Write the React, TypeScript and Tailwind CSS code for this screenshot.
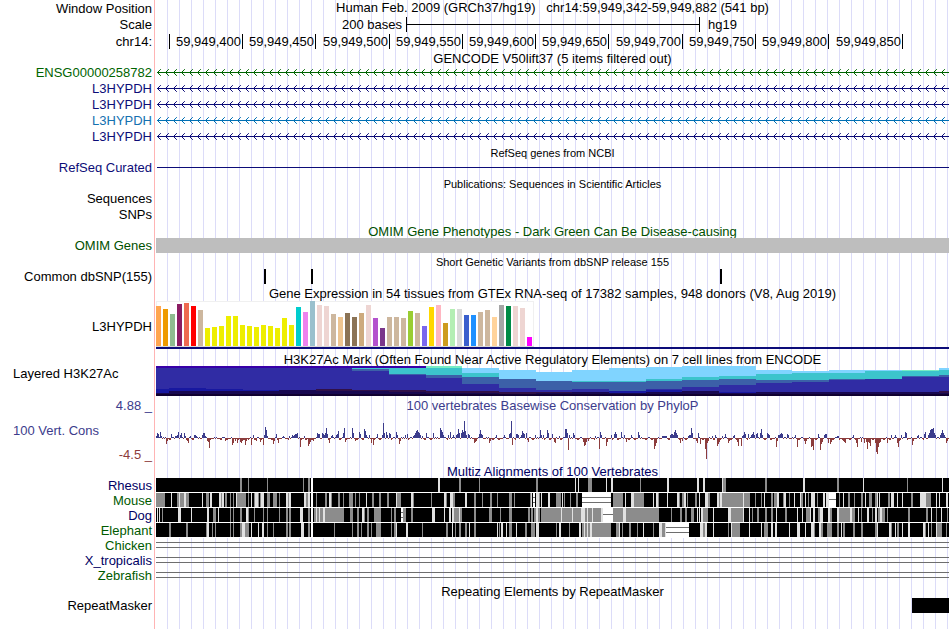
import React from "react";

const PLOT_WIDTH = 793;

/* ---------- track data ---------- */

const ticks: { label: string; width: string }[] = [
  { label: "", width: "w-[14px]" },
  { label: "59,949,400", width: "w-[73px]" },
  { label: "59,949,450", width: "w-[73px]" },
  { label: "59,949,500", width: "w-[74px]" },
  { label: "59,949,550", width: "w-[73px]" },
  { label: "59,949,600", width: "w-[73px]" },
  { label: "59,949,650", width: "w-[73px]" },
  { label: "59,949,700", width: "w-[74px]" },
  { label: "59,949,750", width: "w-[73px]" },
  { label: "59,949,800", width: "w-[73px]" },
  { label: "59,949,850", width: "w-[74px]" },
];

const genes = [
  { name: "ENSG00000258782", text: "text-[#006400]", stroke: "stroke-[#006400]" },
  { name: "L3HYPDH", text: "text-[#0c0c78]", stroke: "stroke-[#0c0c78]" },
  { name: "L3HYPDH", text: "text-[#0c0c78]", stroke: "stroke-[#0c0c78]" },
  { name: "L3HYPDH", text: "text-[#1470b0]", stroke: "stroke-[#0070b4]" },
  { name: "L3HYPDH", text: "text-[#0c0c78]", stroke: "stroke-[#0c0c78]" },
];

// tissue bars: [height, colour]
const tissues: [number, string][] = [
  [40, "#ffa54f"], [37, "#ee9a00"], [32, "#8fbc8f"], [42, "#8b1c62"], [43, "#ee6a50"], [40, "#ff0000"],
  [36, "#cdb79e"], [18, "#eeee00"], [19, "#eeee00"], [20, "#eeee00"], [30, "#eeee00"], [30, "#eeee00"],
  [21, "#eeee00"], [20, "#eeee00"], [19, "#eeee00"], [21, "#eeee00"], [20, "#eeee00"], [18, "#eeee00"],
  [28, "#eeee00"], [21, "#eeee00"], [39, "#00cdcd"], [34, "#ee82ee"], [45, "#9ac0cd"], [41, "#eed5d2"],
  [40, "#eed5d2"], [32, "#cdb79e"], [29, "#eec591"], [33, "#8b7355"], [29, "#8b7355"], [33, "#cdaa7d"],
  [41, "#eed5d2"], [28, "#b452cd"], [18, "#7a378b"], [29, "#cdb79e"], [29, "#cdb79e"], [28, "#cdb79e"],
  [35, "#9acd32"], [33, "#cdb79e"], [20, "#7a67ee"], [39, "#ffd700"], [41, "#ffb6c1"], [23, "#cd9b1d"],
  [37, "#b4eeb4"], [37, "#d9d9d9"], [31, "#3a5fcd"], [31, "#1e90ff"], [34, "#cdb79e"], [36, "#cdb79e"],
  [29, "#ffd39b"], [41, "#a6a6a6"], [40, "#008b45"], [40, "#eed5d2"], [38, "#eed5d2"], [9, "#ff00ff"],
];

const PURPLE = "#3800a8";
const MINT = "#78ecc4";
const SKY = "#80d4ff";
const TEAL = "#3cc4cc";
const STEEL = "#3c60a8";
const INDIGO = "#302ca4";
const BLUE = "#1818a0";
const MAROON = "#301048";
const DARK = "#180850";
const BLACK = "#100030";

// histone mark: [start x, [top y, colour]...], each layer runs down to the next
const histone: [number, [number, string][]][] = [
  [0, [[0, PURPLE], [2, INDIGO], [23, BLUE], [27, DARK]]],
  [13, [[0, PURPLE], [2, INDIGO], [22, BLUE], [25, DARK]]],
  [50, [[0, PURPLE], [2, INDIGO], [23, BLUE], [25, DARK]]],
  [87, [[0, PURPLE], [2, INDIGO], [24, BLUE], [25, DARK]]],
  [123, [[0, PURPLE], [2, INDIGO], [24, DARK]]],
  [160, [[0, PURPLE], [2, INDIGO], [23, MAROON], [25, DARK]]],
  [196, [[0, PURPLE], [2, TEAL], [3, STEEL], [5, INDIGO], [24, MAROON], [25, DARK]]],
  [233, [[0, PURPLE], [2, TEAL], [8, STEEL], [9, INDIGO], [24, MAROON], [26, DARK]]],
  [270, [[0, MINT], [2, TEAL], [9, STEEL], [12, INDIGO], [25, MAROON], [27, DARK]]],
  [306, [[2, SKY], [7, TEAL], [11, STEEL], [18, INDIGO], [25, MAROON], [27, DARK]]],
  [343, [[4, SKY], [13, STEEL], [22, INDIGO], [26, MAROON], [28, DARK]]],
  [380, [[6, SKY], [15, STEEL], [24, INDIGO], [26, MAROON], [27, DARK]]],
  [416, [[4, SKY], [15, TEAL], [16, STEEL], [23, INDIGO], [26, DARK]]],
  [453, [[2, SKY], [15, TEAL], [16, STEEL], [25, BLUE], [27, DARK]]],
  [490, [[1, SKY], [13, TEAL], [15, STEEL], [23, INDIGO], [24, BLUE], [26, DARK]]],
  [526, [[0, SKY], [11, TEAL], [14, STEEL], [21, INDIGO], [25, DARK]]],
  [563, [[0, SKY], [10, TEAL], [13, STEEL], [19, INDIGO], [26, BLUE], [27, DARK]]],
  [600, [[4, SKY], [8, TEAL], [14, STEEL], [17, INDIGO], [26, DARK]]],
  [636, [[5, SKY], [7, TEAL], [14, STEEL], [16, INDIGO], [26, DARK]]],
  [673, [[4, SKY], [7, TEAL], [13, STEEL], [14, INDIGO], [26, DARK]]],
  [709, [[4, SKY], [5, TEAL], [13, INDIGO], [26, DARK]]],
  [746, [[4, MINT], [5, TEAL], [10, STEEL], [11, INDIGO], [26, DARK]]],
  [783, [[2, SKY], [4, TEAL], [9, STEEL], [11, INDIGO], [25, MAROON], [27, DARK]]],
];

// conservation scores at notable columns, "x:score"
const scores = `0:2 1:5 2:4 3:1 4:6 5:2 10:-6 11:-3 15:4 19:2 20:2 21:3 22:6 24:3 25:5 28:5 29:2 31:-3 32:-5 34:2 38:3 39:3 40:2
46:3 47:5 48:5 49:2 51:-3 52:-4 53:-10 62:-1 66:1 69:-3 76:-7 77:-5 79:-3 81:-5 84:-4 85:-5 86:-3 89:-7 90:-3 92:-2 95:-7 97:3 100:-3
104:-4 107:-7 108:3 109:11 110:8 111:2 117:-6 118:-3 120:4 122:-5 127:2 133:2 136:3 137:2 138:3 139:4 140:4 141:5 144:-9 145:-2 148:2
152:-8 153:-6 154:-4 157:-3 161:5 162:4 163:4 166:5 167:4 168:3 169:5 170:10 171:4 173:-5 175:2 176:3 180:3 181:4 182:7 187:5 188:10 189:-4
196:10 197:5 199:-3 203:6 204:4 208:9 209:7 210:3 213:3 215:-5 217:-7 221:4 226:3 227:15 228:5 230:6 231:3 233:5 234:4 240:6 241:3
243:-6 244:-3 249:3 251:4 257:2 258:3 259:5 260:7 261:8 262:6 263:5 264:3 266:2 270:5 277:5 284:10 285:8 286:6 287:3 292:3 294:6 297:3
300:3 301:4 302:9 303:5 305:5 306:8 307:6 308:17 309:7 310:3 312:4 313:3 318:-5 319:-4 320:-3 323:4 324:8 325:4 326:3 333:-5 334:-3
340:3 348:3 353:4 354:5 355:17 356:-7 360:4 361:4 362:3 365:3 366:7 367:5 368:4 370:5 372:-4 379:3 384:8 385:3 387:3 391:8 392:5 396:4
398:-4 399:-5 403:2 409:9 410:9 411:5 412:-12 413:3 417:5 418:3 427:-4 428:-8 429:-7 430:-4 432:-3 439:2 443:-11 444:6 445:3 450:-8
451:-4 455:3 458:4 459:6 460:4 465:6 468:3 470:-4 475:3 482:6 483:3 498:-11 499:-8 500:-5 506:2 507:2 508:2 509:2 510:2 514:3 515:4
516:4 517:3 518:6 519:8 520:5 521:3 524:-5 526:-3 532:2 533:3 534:3 535:10 536:5 540:-3 541:-5 542:5 544:-6 549:-11 550:-21 551:-5
552:-3 556:2 559:3 561:-8 562:-6 563:-4 566:2 569:4 572:-5 573:-3 577:2 578:3 581:-4 582:-8 585:-8 586:2 587:3 588:6 589:4 592:4
595:3 596:4 597:6 598:3 600:4 601:5 604:5 605:9 606:3 611:5 612:4 613:3 620:-9 621:-3 622:3 623:3 624:4 625:5 626:4 631:4 632:3 639:3
641:-9 648:-3 649:-6 650:-3 655:-9 656:-8 657:-12 662:4 664:-12 665:-6 666:-4 668:3 669:4 670:4 672:-5 674:-6 675:-4 681:2 682:2 686:-2
687:-3 688:-4 689:-5 697:3 700:-5 701:-9 705:-4 708:-5 710:-4 711:-11 712:-4 713:-5 714:-8 719:-5 720:-14 721:-16 722:-9 723:-5 724:-4
731:-5 735:3 739:3 741:-5 742:-9 743:-3 745:3 749:6 750:5 756:-7 757:-3 761:2 762:3 768:4 769:6 772:3 773:5 774:8 775:9 776:9 777:10
778:5 779:3 784:3 785:5 786:8 787:5 788:3 790:-5 791:-3`;

// alignment strips, "x,width,shade": g grey, l light, w white, d double-line gap, s single-line gap
const rhesus = `84,2,g 92,1,g 111,1,g 147,1,g 152,2,g 155,2,w 282,2,l 303,2,g 323,1,g 380,2,g 419,1,l 422,1,l 432,4,g 450,1,l
455,2,l 484,1,g 511,2,l 541,2,l 547,2,l 566,1,l 567,3,g 609,2,g 647,2,l 681,2,g 707,1,l 751,1,g 786,1,l`;

const mouse = `0,9,g 15,1,l 21,2,g 23,1,l 24,4,g 28,2,l 30,3,g 46,1,l 50,3,g 54,2,l 63,2,l 65,1,g 66,2,l 69,2,g 74,1,g 77,1,g
80,1,l 81,9,g 92,1,g 95,1,l 98,1,g 99,3,l 102,1,g 104,1,g 105,3,l 111,3,g 117,4,g 123,1,g 130,2,l 132,1,g 133,2,l 148,2,l 150,2,g
152,2,l 155,2,w 160,1,g 169,2,g 173,2,l 175,1,g 182,2,g 187,1,g 193,4,g 199,1,g 203,1,g 210,1,l 216,2,g 223,2,g 231,2,g 240,1,l
241,4,g 255,2,l 257,1,g 275,1,g 288,2,l 290,1,g 294,3,l 297,2,g 309,2,l 318,2,g 326,1,g 334,2,g 341,1,g 353,3,g 358,1,g 374,1,g
375,1,l 377,2,d 380,3,l 383,1,g 385,1,l 392,2,l 400,5,g 406,1,l 408,1,g 414,1,g 420,2,g 426,29,d 457,10,g 469,1,l 475,3,l 478,10,g
497,1,l 500,2,l 502,1,g 511,1,l 521,2,l 523,1,g 526,2,g 528,2,l 531,1,g 539,2,g 543,1,l 549,3,l 552,2,g 561,2,l 563,1,g 564,2,l
566,21,g 587,1,l 588,6,g 599,1,g 605,1,g 608,1,l 615,2,g 618,3,g 621,2,l 627,1,g 628,2,l 633,1,g 638,1,l 644,1,l 645,2,g 649,1,l
652,1,g 655,4,l 661,1,g 667,2,l 670,3,l 673,7,s 683,1,g 687,1,l 692,2,g 698,1,g 705,2,g 709,1,l 713,3,g 719,2,g 721,1,l 723,1,l
732,2,g 735,3,l 741,1,l 746,1,l 755,2,g 764,6,l 770,5,g 780,1,l 783,1,l 790,2,l`;

const dog = `1,1,l 3,1,l 6,1,g 22,3,l 35,1,l 51,2,l 57,3,g 62,1,l 74,1,g 77,1,g 84,2,g 90,2,l 92,1,g 98,1,g 107,1,g 111,1,g 123,1,g
130,2,g 133,2,g 144,3,l 152,2,g 155,2,w 158,2,g 160,1,l 161,2,g 163,1,l 164,3,g 167,2,l 169,19,g 194,3,g 201,2,g 206,2,l 208,1,g
211,2,g 218,7,g 235,1,g 238,2,g 245,2,d 247,3,g 255,2,g 276,3,l 288,1,l 293,2,l 296,2,l 298,5,g 303,1,l 304,2,g 318,2,g 333,3,g
344,1,g 353,3,g 372,2,g 375,2,g 378,2,g 380,2,l 382,2,g 385,20,g 405,1,l 406,10,g 416,1,l 417,8,g 425,4,l 429,2,g 431,1,l 432,4,g
436,1,l 437,8,g 445,2,l 447,10,s 457,10,g 467,3,l 470,33,g 515,1,g 524,2,g 529,2,g 535,3,g 541,1,l 543,1,l 545,2,l 547,5,g 557,1,l
572,3,l 575,12,g 587,1,l 593,1,l 596,1,g 601,2,g 609,2,g 615,2,g 620,1,l 629,2,g 641,1,l 646,1,l 650,4,g 654,1,l 657,2,l 662,2,g
664,3,l 672,2,l 674,2,g 681,2,l 683,11,g 694,2,l 696,3,g 702,1,l 705,1,g 711,2,l 716,1,g 719,2,l 722,2,g 724,2,l 726,3,g 731,1,g
752,2,g 770,2,g 775,1,l 780,1,g 785,1,l 791,1,g`;

const elephant = `13,2,g 30,2,g 50,1,g 51,2,l 56,1,g 59,1,g 74,1,g 77,1,g 84,2,g 86,3,l 89,4,g 95,1,l 102,1,l 106,2,l 111,1,g 117,1,g
130,2,g 133,2,g 145,3,l 152,2,g 155,2,w 178,1,g 196,1,g 201,2,g 205,1,g 211,2,g 215,1,g 220,5,g 235,1,g 238,2,g 240,1,l 250,2,l
266,1,g 290,2,g 296,1,l 299,1,g 303,2,g 309,2,g 313,1,l 318,2,g 341,1,l 343,1,g 345,2,l 350,1,l 353,3,g 360,1,l 369,2,g 375,4,g
380,3,l 400,1,g 403,2,l 413,1,g 423,2,l 426,2,g 428,1,l 429,2,g 431,1,l 432,2,g 434,2,l 436,19,g 460,3,g 463,1,l 466,1,g 473,2,g
481,1,g 487,1,l 497,1,g 503,3,l 506,3,g 509,1,l 510,23,d 544,3,l 547,2,g 549,2,l 557,1,l 572,1,g 575,1,l 576,8,g 593,1,l 605,1,l
608,4,g 615,2,l 619,2,l 633,1,l 641,3,l 649,1,l 655,3,l 658,1,g 663,2,l 665,2,g 671,5,g 681,2,g 685,1,l 687,2,g 697,2,g 705,2,g
719,2,g 721,1,l 733,2,l 735,1,g 739,1,l 741,2,g 746,1,l 752,2,l 767,2,l 769,1,g 772,1,l 775,1,g 780,1,l 781,5,g 790,1,g`;

/* ---------- layout parts ---------- */

type RowProps = {
  label?: React.ReactNode;
  labelClass?: string;
  height: string;
  children?: React.ReactNode;
};

function Row({ label, labelClass = "text-right", height, children }: RowProps) {
  return (
    <div className={`flex ${height}`}>
      <div className={`w-[154px] shrink-0 whitespace-nowrap pr-0.5 ${labelClass}`}>{label}</div>
      <div className="flex min-w-0 flex-1 border-l border-[#ffb4b4] pl-px">
        <div className="min-w-0 flex-1 bg-[repeating-linear-gradient(to_right,transparent_0px,transparent_11px,#dcdcf8_11px,#dcdcf8_12px)]">
          {children}
        </div>
      </div>
    </div>
  );
}

function Title({ text, height, className = "pt-px" }: { text: string; height: string; className?: string }) {
  return (
    <Row height={height}>
      <h2 className={`text-center whitespace-pre ${className}`}>{text}</h2>
    </Row>
  );
}

function Plot({ height, className, children }: { height: number; className: string; children: React.ReactNode }) {
  return (
    <svg
      className={`block w-full ${className}`}
      viewBox={`0 0 ${PLOT_WIDTH} ${height}`}
      preserveAspectRatio="none"
      shapeRendering="crispEdges"
      aria-hidden="true"
    >
      {children}
    </svg>
  );
}

/* ---------- tracks ---------- */

function GeneLine({ stroke }: { stroke: string }) {
  let arrows = "";
  for (let x = 1; x < PLOT_WIDTH - 4; x += 8) {
    arrows += `M${x + 3.8} 5.2L${x + 0.5} 8.5L${x + 3.8} 11.8`;
  }
  return (
    <Plot height={16} className="h-4">
      <path d={`M1 8.5H${PLOT_WIDTH}`} className={stroke} />
      <path d={arrows} fill="none" shapeRendering="geometricPrecision" className={stroke} />
    </Plot>
  );
}

function TissueChart() {
  return (
    <Plot height={50} className="h-[50px]">
      <rect x="0" y="0" width="378" height="46" fill="#f0f0f0" />
      <rect x="1" y="1" width="376" height="44" fill="#ffffff" />
      <rect x="0" y="45" width="378" height="1" fill="#d8d8d8" />
      {tissues.map(([h, fill], i) => (
        <rect key={i} x={i * 7} y={45 - h} width="5" height={h} fill={fill} />
      ))}
      <rect x="0" y="46" width={PLOT_WIDTH} height="2" fill="#0c0c78" />
    </Plot>
  );
}

function HistoneChart() {
  return (
    <Plot height={30} className="h-[30px]">
      {histone.map(([x, layers], i) => {
        const end = i + 1 < histone.length ? histone[i + 1][0] : PLOT_WIDTH;
        return layers.map(([y, fill]) => (
          <rect key={`${x}-${y}`} x={x} y={y} width={end - x} height={30 - y} fill={fill} />
        ));
      })}
      <rect x="0" y="28" width={PLOT_WIDTH} height="2" fill={BLACK} />
    </Plot>
  );
}

function ConservationChart() {
  const known = new Map<number, number>();
  scores.split(/\s+/).forEach((item) => {
    const [x, v] = item.split(":").map(Number);
    known.set(x, v);
  });
  let up = "";
  let down = "";
  for (let x = 0; x < PLOT_WIDTH; x++) {
    let v = known.get(x);
    if (v === undefined) {
      const n = (x * 7919 + x * x * 31) % 17;
      v = n < 5 ? 1 + (n % 2) : n > 14 ? -2 : -1;
    }
    if (v > 0) up += `M${x} 26h1v${-v}h-1z`;
    else down += `M${x} 26h1v${-v}h-1z`;
  }
  return (
    <Plot height={50} className="h-[50px]">
      <path d={up} fill="#3c3c8c" />
      <path d={down} fill="#8c3c3c" />
    </Plot>
  );
}

function Strip({ data }: { data: string }) {
  return (
    <Plot height={15} className="h-[15px]">
      <rect x="0" y="0" width={PLOT_WIDTH} height="14" fill="#000000" />
      <rect x="0" y="14" width={PLOT_WIDTH} height="1" fill="#ffffff" />
      {data.split(/\s+/).map((item) => {
        const [xs, ws, kind] = item.split(",");
        const x = Number(xs);
        const w = Number(ws);
        const fill = kind === "g" ? "#8c8c8c" : kind === "l" ? "#e1e1e1" : "#ffffff";
        return (
          <g key={item}>
            <rect x={x} y="0" width={w} height="14" fill={fill} />
            {kind === "d" && <path d={`M${x} 4.5h${w}M${x} 9.5h${w}`} stroke="#6e6e6e" />}
            {kind === "s" && <path d={`M${x} 6.5h${w}`} stroke="#6e6e6e" />}
          </g>
        );
      })}
    </Plot>
  );
}

function EmptyStrip() {
  return (
    <Plot height={15} className="h-[15px]">
      <path d={`M0 4.5H${PLOT_WIDTH}M0 9.5H${PLOT_WIDTH}`} stroke="#6e6e6e" />
    </Plot>
  );
}

const species = [
  { name: "Rhesus", color: "text-right text-[#000064]", data: rhesus },
  { name: "Mouse", color: "text-right text-[#005a00]", data: mouse },
  { name: "Dog", color: "text-right text-[#000064]", data: dog },
  { name: "Elephant", color: "text-right text-[#005a00]", data: elephant },
  { name: "Chicken", color: "text-right text-[#005a00]", data: "" },
  { name: "X_tropicalis", color: "text-right text-[#000064]", data: "" },
  { name: "Zebrafish", color: "text-right text-[#005a00]", data: "" },
];

export default function App() {
  return (
    <main className="min-h-screen overflow-hidden bg-white pr-px font-['Liberation_Sans',Arial,sans-serif] text-[13px] leading-4 text-black">
      <Row height="h-[17px]" label="Window Position" labelClass="pt-px text-right">
        <h1 className="text-center whitespace-pre">
          {"Human Feb. 2009 (GRCh37/hg19)   chr14:59,949,342-59,949,882 (541 bp)"}
        </h1>
      </Row>
      <Row height="h-4" label="Scale">
        <div className="flex whitespace-nowrap">
          <div className="w-[250px] pr-1 text-right">200 bases</div>
          <div className="flex h-[15px] w-[294px] items-center border-x border-black">
            <div className="h-px flex-1 bg-black" />
          </div>
          <div className="pl-2">hg19</div>
        </div>
      </Row>
      <Row height="h-[17px]" label="chr14:" labelClass="pt-px text-right">
        <div className="flex pt-px">
          {ticks.map((t, i) => (
            <div key={i} className={`flex h-[15px] items-center justify-end border-r border-black pr-px ${t.width}`}>
              {t.label}
            </div>
          ))}
        </div>
      </Row>
      <Title height="h-[14px]" text="GENCODE V50lift37 (5 items filtered out)" />
      {genes.map((g, i) => (
        <Row key={i} height="h-4" label={g.name} labelClass={`pt-px text-right ${g.text}`}>
          <GeneLine stroke={g.stroke} />
        </Row>
      ))}

      <Title height="h-4" className="pt-px text-[11px]" text="RefSeq genes from NCBI" />
      <Row height="h-4" label="RefSeq Curated" labelClass="text-right text-[#0c0c78]">
        <Plot height={16} className="h-4">
          <path d={`M1 7.5H${PLOT_WIDTH}`} stroke="#0c0c78" />
        </Plot>
      </Row>

      <Title height="h-[15px]" className="text-[11px]" text="Publications: Sequences in Scientific Articles" />
      <Row height="h-4" label="Sequences" />
      <Row height="h-4" label="SNPs" />

      <Title
        height="h-[15px]"
        className="pt-px text-[#005000]"
        text="OMIM Gene Phenotypes - Dark Green Can Be Disease-causing"
      />
      <Row height="h-4" label="OMIM Genes" labelClass="text-right text-[#005000]">
        <div className="h-[15px] bg-[#bebebe]" />
      </Row>

      <Title height="h-[15px]" className="text-[11px]" text="Short Genetic Variants from dbSNP release 155" />
      <Row height="h-4" label="Common dbSNP(155)">
        <Plot height={16} className="h-4">
          <path d="M108 0h2v15h-2zM155 0h2v15h-2zM564 0h2v15h-2z" />
        </Plot>
      </Row>

      <Title
        height="h-4"
        text="Gene Expression in 54 tissues from GTEx RNA-seq of 17382 samples, 948 donors (V8, Aug 2019)"
      />
      <Row height="h-[50px]" label="L3HYPDH" labelClass="flex items-center justify-end pt-0.5">
        <TissueChart />
      </Row>

      <Title
        height="h-[15px]"
        text="H3K27Ac Mark (Often Found Near Active Regulatory Elements) on 7 cell lines from ENCODE"
      />
      <Row height="h-8" label="Layered H3K27Ac" labelClass="pl-[13px]">
        <HistoneChart />
      </Row>

      <Row
        height="h-[65px]"
        labelClass="flex flex-col justify-between pl-[13px] text-[#3c3c8c]"
        label={
          <>
            <span className="text-right">4.88 _</span>
            <span>100 Vert. Cons</span>
            <span className="text-right text-[#8c3c3c]">-4.5 _</span>
          </>
        }
      >
        <h2 className="h-[14px] text-center text-[#3c3c8c]">100 vertebrates Basewise Conservation by PhyloP</h2>
        <ConservationChart />
      </Row>

      <Title height="h-[15px]" className="pt-px text-[#000064]" text="Multiz Alignments of 100 Vertebrates" />
      {species.map((s) => (
        <Row key={s.name} height="h-[15px]" label={s.name} labelClass={s.color}>
          {s.data ? <Strip data={s.data} /> : <EmptyStrip />}
        </Row>
      ))}

      <Title height="h-[15px]" text="Repeating Elements by RepeatMasker" />
      <Row height="h-[31px]" label="RepeatMasker">
        <Plot height={15} className="h-[15px]">
          <rect x="756" y="0" width="37" height="15" />
        </Plot>
      </Row>
    </main>
  );
}
